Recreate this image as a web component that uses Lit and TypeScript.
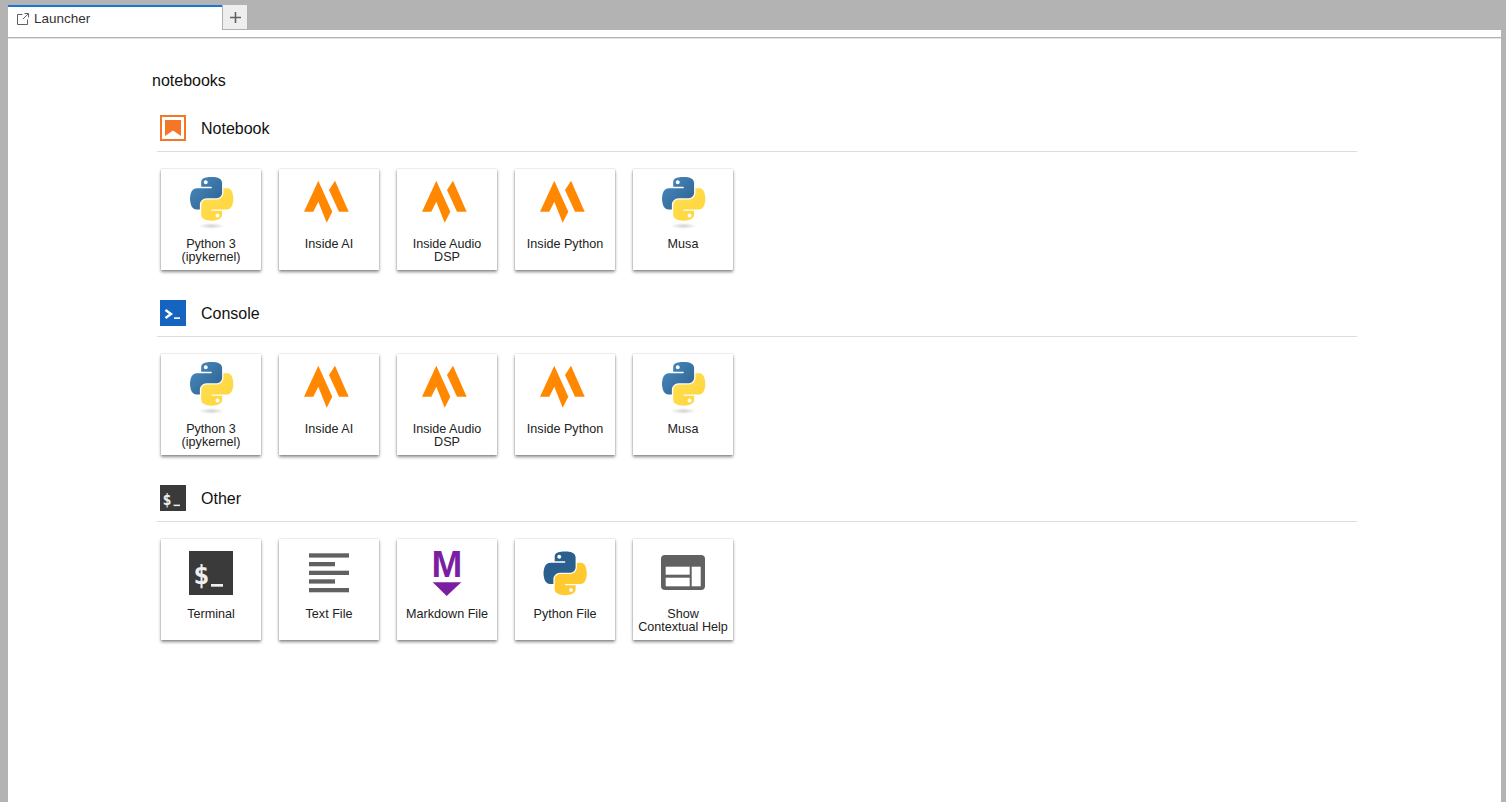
import { LitElement, css, html, svg } from 'lit';
import { customElement } from 'lit/decorators.js';

const SNAKE_BLUE =
  'M54.919 0.001c-4.584.022-8.961.413-12.812 1.095C30.76 3.099 28.7 7.295 28.7 15.032V25.25h26.813v3.406H18.638c-7.793 0-14.616 4.684-16.75 13.594-2.462 10.213-2.571 16.586 0 27.25 1.906 7.938 6.458 13.594 14.25 13.594h9.219v-12.25c0-8.85 7.657-16.656 16.75-16.656h26.781c7.455 0 13.406-6.138 13.406-13.625V15.032c0-7.266-6.13-12.725-13.406-13.937C64.282.328 59.502-.02 54.919 0.001zM40.419 8.22c2.77 0 5.031 2.299 5.031 5.125 0 2.816-2.262 5.094-5.031 5.094-2.779 0-5.031-2.277-5.031-5.094 0-2.826 2.252-5.125 5.031-5.125z';
const SNAKE_YELLOW =
  'M85.638 28.657v11.906c0 9.231-7.826 17-16.75 17H42.106c-7.336 0-13.406 6.279-13.406 13.625V96.72c0 7.266 6.319 11.54 13.406 13.625 8.488 2.496 16.627 2.947 26.781 0 6.75-1.954 13.406-5.888 13.406-13.625V86.5H55.513v-3.406H95.7c7.793 0 10.696-5.436 13.406-13.594 2.8-8.399 2.68-16.476 0-27.25-1.926-7.757-5.604-13.594-13.406-13.594zM70.575 93.313c2.779 0 5.031 2.277 5.031 5.094 0 2.826-2.252 5.125-5.031 5.125-2.77 0-5.031-2.299-5.031-5.125 0-2.816 2.262-5.094 5.031-5.094z';

const kernelIcon = svg`
  <defs>
    <linearGradient id="snake-b" x1="0" y1="0" x2="1" y2="1">
      <stop offset="0" stop-color="#4b8cc0" />
      <stop offset="1" stop-color="#2b5f8e" />
    </linearGradient>
    <linearGradient id="snake-y" x1="0" y1="0" x2="1" y2="1">
      <stop offset="0" stop-color="#ffe052" />
      <stop offset="1" stop-color="#ffd43b" />
    </linearGradient>
    <radialGradient id="snake-s">
      <stop offset="0" stop-color="#000" stop-opacity=".18" />
      <stop offset="1" stop-color="#000" stop-opacity="0" />
    </radialGradient>
  </defs>
  <g transform="translate(5 0) scale(.39)">
    <path fill="url(#snake-b)" fill-rule="evenodd" d=${SNAKE_BLUE} />
    <path fill="url(#snake-y)" fill-rule="evenodd" d=${SNAKE_YELLOW} />
  </g>
  <ellipse cx="26.5" cy="49" rx="13" ry="3" fill="url(#snake-s)" />
`;

const insideIcon = svg`
  <path fill="#ff8800" d="M1 34.7 15.3 3.7 29.3 34.7 23.7 45.7 15.3 24.7 10.3 34.7Z" />
  <path fill="#ff8800" d="M26 13 32 3.7 45.7 34.7H36Z" />
`;

const terminalIcon = svg`
  <rect x="4" y="4" width="44" height="44" fill="#3a3a3a" />
  <text class="mono" x="16.5" y="37" font-size="27" text-anchor="middle" fill="#eee">$</text>
  <rect x="26" y="37" width="12" height="2.700" fill="#eee" />
`;

const textIcon = svg`
  <g fill="#616161">
    <rect x="6" y="6.300" width="40" height="4.300" />
    <rect x="6" y="15" width="26" height="4.300" />
    <rect x="6" y="23.700" width="40" height="4.300" />
    <rect x="6" y="32.300" width="26" height="4.300" />
    <rect x="6" y="41" width="40" height="4.300" />
  </g>
`;

const markdownIcon = svg`
  <text class="md" x="26" y="29.500" font-size="37" text-anchor="middle" fill="#7b1fa2">M</text>
  <path fill="#7b1fa2" d="M11.7 35.300H40.300L25.700 49Z" />
`;

const pythonFileIcon = svg`
  <g transform="translate(4.500 4.500) scale(.39)">
    <path fill="#2b5f8e" fill-rule="evenodd" d=${SNAKE_BLUE} />
    <path fill="#ffca30" fill-rule="evenodd" d=${SNAKE_YELLOW} />
  </g>
`;

const helpIcon = svg`
  <rect x="4" y="8" width="44" height="35" rx="4" fill="#616161" />
  <g fill="#fff">
    <rect x="8.700" y="19.700" width="24" height="8" />
    <rect x="8.700" y="30.700" width="24" height="8.600" />
    <rect x="34.700" y="19.700" width="9" height="19.600" />
  </g>
`;

const kernels = [
  { label: 'Python 3 (ipykernel)', icon: kernelIcon },
  { label: 'Inside AI', icon: insideIcon },
  { label: 'Inside Audio DSP', icon: insideIcon },
  { label: 'Inside Python', icon: insideIcon },
  { label: 'Musa', icon: kernelIcon }
];

const sections = [
  {
    title: 'Notebook',
    icon: svg`
      <rect x="1" y="1" width="24" height="24" fill="none" stroke="#f37726" stroke-width="2" />
      <path fill="#f37726" d="M5 5H21V21L13 15.500 5 21Z" />
    `,
    cards: kernels
  },
  {
    title: 'Console',
    icon: svg`
      <rect width="26" height="26" fill="#1565c0" />
      <path fill="none" stroke="#fff" stroke-width="2.400" d="M5.500 10 11 14 5.500 18" />
      <rect x="14" y="17.300" width="6" height="1.600" fill="#fff" />
    `,
    cards: kernels
  },
  {
    title: 'Other',
    icon: svg`
      <rect width="26" height="26" fill="#3a3a3a" />
      <text class="mono" x="7" y="19.500" font-size="15" text-anchor="middle" fill="#eee">$</text>
      <rect x="13.500" y="19.600" width="6.500" height="1.500" fill="#eee" />
    `,
    cards: [
      { label: 'Terminal', icon: terminalIcon },
      { label: 'Text File', icon: textIcon },
      { label: 'Markdown File', icon: markdownIcon },
      { label: 'Python File', icon: pythonFileIcon },
      { label: 'Show Contextual Help', icon: helpIcon }
    ]
  }
];

@customElement('app-root')
export class AppRoot extends LitElement {
  static styles = css`
    :host {
      display: flex;
      flex-direction: column;
      height: 100vh;
      padding: 0 5px 0 8px;
      box-sizing: border-box;
      background: #b3b3b3;
      font-family: 'Liberation Sans', Arial, sans-serif;
      color: #111;
      overflow: hidden;
    }

    .tabbar {
      display: flex;
      height: 25px;
      margin-top: 5px;
    }

    .tab {
      display: flex;
      align-items: center;
      gap: 5px;
      width: 214px;
      padding-left: 9px;
      box-sizing: border-box;
      background: #fff;
      border-top: 2px solid #1976d2;
      font-size: 13.500px;
      color: #333;
    }

    .tab svg {
      width: 12px;
      height: 12px;
    }

    .add {
      display: flex;
      align-items: center;
      justify-content: center;
      width: 26px;
      box-sizing: border-box;
      background: #eee;
      border: 1px solid #b0b0b0;
      border-top: none;
    }

    .add svg {
      width: 11px;
      height: 11px;
    }

    .panel {
      flex: 1;
      background: #fff;
    }

    .strip {
      height: 7px;
      border-bottom: 1px solid #b3b3b3;
      box-shadow: 0 1px 0 #e4e4e4;
    }

    .launcher {
      width: 1205px;
      margin-left: 144px;
      padding-top: 33px;
    }

    .cwd {
      height: 19px;
      line-height: 19px;
      font-size: 16px;
      margin-bottom: 25px;
    }

    .section {
      margin-left: 5px;
      margin-bottom: 30px;
    }

    .header {
      display: flex;
      align-items: center;
      gap: 15px;
      padding: 0 0 10px 3px;
      border-bottom: 1px solid #ddd;
      font-size: 16px;
    }

    .header svg {
      width: 26px;
      height: 26px;
    }

    .title {
      margin-top: 2px;
    }

    .cards {
      display: flex;
      gap: 18px;
      margin: 17px 0 0 4px;
    }

    .card {
      display: flex;
      flex-direction: column;
      align-items: center;
      width: 100px;
      height: 101px;
      padding-top: 8px;
      box-sizing: border-box;
      background: #fff;
      box-shadow: 0 2px 3px rgba(0, 0, 0, 0.45), 0 0 1px rgba(0, 0, 0, 0.3);
    }

    .card svg {
      width: 52px;
      height: 52px;
      overflow: visible;
    }

    .label {
      margin-top: 9px;
      width: 100px;
      padding: 0 4px;
      box-sizing: border-box;
      font-size: 12.600px;
      line-height: 13px;
      text-align: center;
      color: #222;
    }

    .mono {
      font-family: 'DejaVu Sans Mono', monospace;
      font-weight: 700;
    }

    .md {
      font-family: 'Liberation Sans', Arial, sans-serif;
      font-weight: 700;
    }
  `;

  render() {
    return html`
      <div class="tabbar">
        <div class="tab">
          <svg viewBox="0 0 12 12">
            <path fill="none" stroke="#616161" d="M5.500 1.500H.5V11.500H10.500V6.500M6 6 11 1M7.500 .5H11.500V4.500" />
          </svg>
          Launcher
        </div>
        <div class="add">
          <svg viewBox="0 0 11 11"><path stroke="#616161" stroke-width="1.600" d="M5.500 0V11M0 5.500H11" /></svg>
        </div>
      </div>
      <div class="panel">
        <div class="strip"></div>
        <div class="launcher">
          <div class="cwd">notebooks</div>
          ${sections.map(
            (section) => html`
              <div class="section">
                <div class="header">
                  <svg viewBox="0 0 26 26">${section.icon}</svg>
                  <span class="title">${section.title}</span>
                </div>
                <div class="cards">
                  ${section.cards.map(
                    (card) => html`
                      <div class="card">
                        <svg viewBox="0 0 52 52">${card.icon}</svg>
                        <div class="label">${card.label}</div>
                      </div>
                    `
                  )}
                </div>
              </div>
            `
          )}
        </div>
      </div>
    `;
  }
}
